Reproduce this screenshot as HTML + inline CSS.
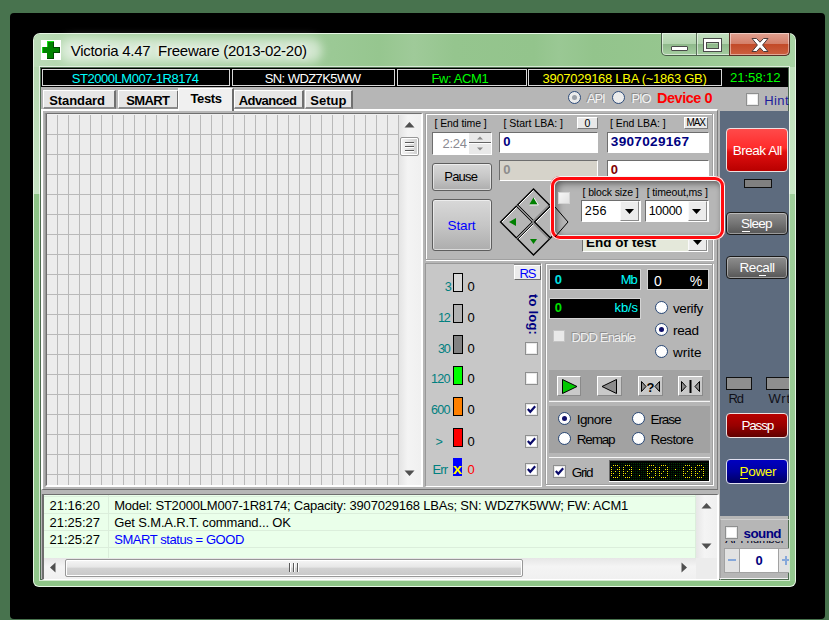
<!DOCTYPE html>
<html><head><meta charset="utf-8"><title>Victoria 4.47</title>
<style>
html,body{margin:0;padding:0}
body{width:829px;height:620px;overflow:hidden;position:relative;background:#48734e;font-family:"Liberation Sans",sans-serif;}
.a{position:absolute;box-sizing:border-box}
.t{position:absolute;white-space:pre;line-height:normal;font-family:"Liberation Sans",sans-serif;}

.btn{background:linear-gradient(#d8d8d8,#c6c6c6 50%,#adadad);border:1px solid #5e5e5e;border-radius:3px;box-shadow:inset 0 0 0 1px rgba(255,255,255,.55)}
.edit{background:#fff;border:1px solid;border-color:#6e6e6e #fff #fff #6e6e6e}
.chk{background:#fff;border:1px solid #8e8f8f;box-shadow:inset 0 0 0 1px #e9e9e9}
.rad{background:radial-gradient(circle at 50% 40%,#fff 55%,#e4e8ee 100%);border:1px solid #2c4a78;border-radius:50%}
.cb{background:#ececec;border:1px solid;border-color:#fafafa #8c8c8c #8c8c8c #fafafa}
.bb{background:#000;border:1px solid #d4d4d4}

</style></head><body>
<div class="a " style="left:10px;top:13px;width:815px;height:606px;background:#000;border-radius:4px"></div>
<div class="a " style="left:33px;top:33px;width:763px;height:554px;border-radius:7px 7px 6px 6px;background:#8ec487;border:1px solid rgba(238,248,236,.92)"></div>
<div class="a " style="left:34px;top:34px;width:761px;height:33px;background:linear-gradient(90deg,#bcdcb8 0px,#b2d7ad 30px,#a6d0a0 90px,#9fcc99 200px,#9bc995 300px,#96c68f 345px,#9fca99 380px,#95c58e 420px,#93c48c 500px,#9ac894 525px,#93c48c 560px,#96c68f 640px,#a8d3a3 761px);border-radius:6px 6px 0 0"></div>
<div class="a " style="left:60px;top:38px;width:262px;height:25px;background:rgba(255,255,255,.55);filter:blur(5px);border-radius:12px"></div>
<div class="a " style="left:34px;top:67px;width:6px;height:127px;background:linear-gradient(180deg,#b5d7b0,#c6e2c2)"></div>
<div class="a " style="left:34px;top:194px;width:6px;height:387px;background:linear-gradient(180deg,#8cc285,#90c68a)"></div>
<div class="a " style="left:789px;top:67px;width:6px;height:127px;background:linear-gradient(180deg,#bfe0bb,#c8e6c4)"></div>
<div class="a " style="left:789px;top:194px;width:6px;height:387px;background:linear-gradient(180deg,#9fce9a,#93c78e)"></div>
<div class="a " style="left:39px;top:66px;width:751px;height:515px;border:1px solid rgba(255,255,255,.62)"></div>
<div class="a " style="left:41px;top:40px;width:20px;height:20px;background:#fff"></div>
<svg class="a" style="left:41px;top:40px" width="20" height="20" shape-rendering="crispEdges"><path d="M6 1h7v6h6v6h-6v6h-7v-6h-5v-6h5z" fill="#008200"/><path d="M6 1h7v1h-6v5h-5v6h-1v-6h5z" fill="#12e012"/><path d="M12 2h1v5h6v6h-6v6h-7v-1h6v-6h6v-4h-6z" fill="#004a00"/></svg>
<span class="t" style="left:70.70px;top:42.02px;font-size:15px;color:#000;letter-spacing:-0.268px;text-shadow:0 0 5px rgba(255,255,255,.9),0 0 8px rgba(255,255,255,.7)">Victoria 4.47  Freeware (2013-02-20)</span>
<div class="a " style="left:661px;top:33px;width:129px;height:23px;border:1px solid #4a5e4a;border-top:none;border-radius:0 0 5px 5px;background:linear-gradient(180deg,#c3dfc0 0,#b2d4ae 48%,#8fb98b 52%,#a5cea0 100%);box-shadow:inset 0 0 0 1px rgba(255,255,255,.55)"></div>
<div class="a " style="left:696px;top:33px;width:1px;height:22px;background:#5a6e5a"></div>
<div class="a " style="left:697px;top:34px;width:1px;height:21px;background:rgba(255,255,255,.5)"></div>
<div class="a " style="left:729px;top:33px;width:61px;height:23px;border:1px solid #5a3028;border-top:none;border-radius:0 0 5px 0;background:linear-gradient(180deg,#e0a090 0,#d4806a 48%,#c24a28 52%,#cc6040 100%);box-shadow:inset 0 0 0 1px rgba(255,255,255,.45)"></div>
<div class="a " style="left:671px;top:46px;width:17px;height:5px;background:#fff;border:1px solid #4a4a4a;border-radius:1px"></div>
<div class="a " style="left:704px;top:39px;width:17px;height:12px;background:transparent;border:2px solid #fff;border-top-width:3px;outline:1px solid #4a4a4a;box-shadow:inset 0 0 0 1px #4a4a4a"></div>
<svg class="a" style="left:749px;top:37px" width="22" height="16" viewBox="0 0 22 16"><path d="M3 1.5 L7.5 1.5 L11 5.2 L14.5 1.5 L19 1.5 L13.6 8 L19 14.5 L14.5 14.5 L11 10.8 L7.5 14.5 L3 14.5 L8.4 8 Z" fill="#fff" stroke="#4a3a3a" stroke-width="1"/></svg>
<div class="a" style="left:40px;top:67px;width:749px;height:513px;background:#4e6c50;overflow:hidden"><div class="a" style="left:-40px;top:-67px;width:829px;height:620px">
<div class="a " style="left:41px;top:68px;width:747px;height:511px;background:#b6b6b6"></div>
<div class="a " style="left:41px;top:68px;width:747px;height:19px;background:#000"></div>
<div class="a " style="left:42px;top:69px;width:188px;height:17px;border:1px solid #d8d8d8"></div>
<div class="a " style="left:232px;top:69px;width:163px;height:17px;border:1px solid #d8d8d8"></div>
<div class="a " style="left:397px;top:69px;width:130px;height:17px;border:1px solid #d8d8d8"></div>
<div class="a " style="left:528px;top:69px;width:194px;height:17px;border:1px solid #d8d8d8"></div>
<span class="t" style="left:71.80px;top:70.83px;font-size:13px;color:#00ffff;letter-spacing:-0.468px;">ST2000LM007-1R8174</span>
<span class="t" style="left:264.70px;top:70.83px;font-size:13px;color:#ffffff;letter-spacing:-0.569px;">SN: WDZ7K5WW</span>
<span class="t" style="left:431.40px;top:70.83px;font-size:13px;color:#00ff00;letter-spacing:-0.367px;">Fw: ACM1</span>
<span class="t" style="left:542.50px;top:70.83px;font-size:13px;color:#ffff00;letter-spacing:-0.277px;">3907029168 LBA (~1863 GB)</span>
<span class="t" style="left:730.00px;top:70.45px;font-size:13.2px;color:#00ff00;letter-spacing:-0.106px;">21:58:12</span>
<div class="a " style="left:41px;top:109px;width:677px;height:381px;border-left:2px solid #fff;border-top:2px solid #fff;border-right:1px solid #7c7c7c;border-bottom:1px solid #707070"></div>
<div class="a " style="left:43px;top:90px;width:73px;height:19px;background:#e6e6e6;border-left:1px solid #fff;border-top:1px solid #fff;border-right:2px solid #707070;border-bottom:2px solid #8c8c8c"></div>
<span class="t" style="left:49.20px;top:93.23px;font-size:13px;color:#000;font-weight:bold;letter-spacing:-0.078px;">Standard</span>
<div class="a " style="left:118px;top:90px;width:61px;height:19px;background:#e6e6e6;border-left:1px solid #fff;border-top:1px solid #fff;border-right:2px solid #707070;border-bottom:2px solid #8c8c8c"></div>
<span class="t" style="left:126.20px;top:93.23px;font-size:13px;color:#000;font-weight:bold;letter-spacing:-0.605px;">SMART</span>
<div class="a " style="left:234px;top:90px;width:70px;height:19px;background:#e6e6e6;border-left:1px solid #fff;border-top:1px solid #fff;border-right:2px solid #707070;border-bottom:2px solid #8c8c8c"></div>
<span class="t" style="left:238.70px;top:93.23px;font-size:13px;color:#000;font-weight:bold;letter-spacing:-0.549px;">Advanced</span>
<div class="a " style="left:305px;top:90px;width:48px;height:19px;background:#e6e6e6;border-left:1px solid #fff;border-top:1px solid #fff;border-right:2px solid #707070;border-bottom:2px solid #8c8c8c"></div>
<span class="t" style="left:310.30px;top:93.23px;font-size:13px;color:#000;font-weight:bold;letter-spacing:0.019px;">Setup</span>
<div class="a " style="left:178px;top:88px;width:56px;height:23px;background:#f0f0f0;border-left:1px solid #fff;border-top:1px solid #fff;border-right:2px solid #6c6c6c;"></div>
<span class="t" style="left:190.50px;top:90.73px;font-size:13px;color:#000;font-weight:bold;letter-spacing:-0.375px;">Tests</span>
<div class="a " style="left:44px;top:113px;width:1px;height:374px;background:#aeaeae"></div>
<div class="a " style="left:44px;top:113px;width:379px;height:1px;background:#a8a8a8"></div>
<div class="a " style="left:45px;top:113px;width:378px;height:374px;border:solid;border-width:1px 2px 2px 2px;border-color:#707070 #fff #fff #989898;background:#f0f0f0"></div>
<div class="a " style="left:46px;top:114px;width:1px;height:371px;background:#6e6e6e"></div>
<div class="a " style="left:47px;top:115px;width:352px;height:370px;background:repeating-linear-gradient(90deg,transparent 0,transparent 10px,#b9b9b9 10px,#b9b9b9 11px),repeating-linear-gradient(180deg,transparent 0,transparent 19px,#b9b9b9 19px,#b9b9b9 20px),#ececec"></div>
<div class="a " style="left:399px;top:115px;width:22px;height:370px;background:linear-gradient(90deg,#e4e4e4,#f4f4f4 40%,#f0f0f0)"></div>
<svg class="a" style="left:404px;top:121px" width="11" height="7"><path d="M0.5 6.5 L5.5 1 L10.5 6.5 Z" fill="#505050"/></svg>
<svg class="a" style="left:404px;top:470px" width="11" height="7"><path d="M0.5 0.5 L5.5 6 L10.5 0.5 Z" fill="#505050"/></svg>
<div class="a " style="left:400px;top:137px;width:19px;height:19px;background:linear-gradient(90deg,#f6f6f6,#e2e2e2 50%,#cfcfcf);border:1px solid #979797;border-radius:2px;box-shadow:inset 0 0 0 1px #fff"></div>
<div class="a " style="left:405px;top:142px;width:9px;height:1px;background:#5a5a5a"></div>
<div class="a " style="left:405px;top:143px;width:9px;height:1px;background:#fff"></div>
<div class="a " style="left:405px;top:146px;width:9px;height:1px;background:#5a5a5a"></div>
<div class="a " style="left:405px;top:147px;width:9px;height:1px;background:#fff"></div>
<div class="a " style="left:405px;top:150px;width:9px;height:1px;background:#5a5a5a"></div>
<div class="a " style="left:405px;top:151px;width:9px;height:1px;background:#fff"></div>
<div class="a rad" style="left:567.5px;top:90.5px;width:13px;height:13px;background:#ececec"></div>
<div class="a " style="left:571.5px;top:94.5px;width:5px;height:5px;background:#9aa0a8;border-radius:50%"></div>
<span class="t" style="left:587.00px;top:90.94px;font-size:13px;color:#f4f4f4;letter-spacing:-1.200px;text-shadow:-1px -1px 0 #8a8a8a">API</span>
<div class="a rad" style="left:611.5px;top:90.5px;width:13px;height:13px;background:#ececec"></div>
<span class="t" style="left:631.60px;top:90.94px;font-size:13px;color:#f4f4f4;letter-spacing:-1.200px;text-shadow:-1px -1px 0 #8a8a8a">PIO</span>
<span class="t" style="left:657.00px;top:89.68px;font-size:14.5px;color:#ff0000;font-weight:bold;letter-spacing:-0.480px;">Device 0</span>
<div class="a chk" style="left:746px;top:93px;width:13px;height:13px;"></div>
<span class="t" style="left:764.30px;top:93.03px;font-size:13px;color:#1c1c9c;letter-spacing:0.394px;">Hints</span>
<div class="a " style="left:426px;top:114px;width:288px;height:147px;border:1px solid #fff"></div>
<div class="a " style="left:425px;top:113px;width:288px;height:147px;border:1px solid #a0a0a0;border-right-color:transparent;border-bottom-color:transparent"></div>
<div class="a " style="left:426px;top:259px;width:286px;height:1px;background:#a0a0a0"></div>
<div class="a " style="left:712px;top:114px;width:1px;height:146px;background:#a0a0a0"></div>
<span class="t" style="left:434.50px;top:116.90px;font-size:10.5px;color:#000;letter-spacing:-0.083px;">[ End time ]</span>
<div class="a edit" style="left:432px;top:132px;width:60px;height:23px;"></div>
<span class="t" style="left:442.50px;top:135.83px;font-size:13px;color:#8a8a92;letter-spacing:-0.271px;">2:24</span>
<div class="a " style="left:469px;top:133px;width:22px;height:21px;background:#e9e9e9"></div>
<div class="a " style="left:469px;top:142px;width:22px;height:2px;background:#646464;border-bottom:1px solid #fff"></div>
<svg class="a" style="left:477px;top:136px" width="6" height="4"><path d="M0 3.5 L3 0.5 L6 3.5 Z" fill="#8a8a8a"/></svg>
<svg class="a" style="left:477px;top:147px" width="6" height="4"><path d="M0 0.5 L3 3.5 L6 0.5 Z" fill="#8a8a8a"/></svg>
<span class="t" style="left:503.50px;top:116.90px;font-size:10.5px;color:#000;letter-spacing:-0.002px;">[ Start LBA: ]</span>
<div class="a " style="left:577px;top:117px;width:21px;height:12px;background:#e8e8e8;border:1px solid;border-color:#fff #7a7a7a #7a7a7a #fff"></div>
<span class="t" style="left:584.60px;top:116.90px;font-size:10.5px;color:#000;">0</span>
<div class="a edit" style="left:499px;top:132px;width:99px;height:21px;"></div>
<span class="t" style="left:503.20px;top:134.44px;font-size:13px;color:#000080;font-weight:bold;">0</span>
<span class="t" style="left:610.00px;top:116.90px;font-size:10.5px;color:#000;letter-spacing:-0.022px;">[ End LBA: ]</span>
<div class="a " style="left:684px;top:117px;width:24px;height:12px;background:#e8e8e8;border:1px solid;border-color:#fff #7a7a7a #7a7a7a #fff"></div>
<span class="t" style="left:686.60px;top:117.35px;font-size:10px;color:#000;letter-spacing:-1.136px;">MAX</span>
<div class="a edit" style="left:607px;top:132px;width:102px;height:21px;"></div>
<span class="t" style="left:610.80px;top:133.89px;font-size:13.6px;color:#000080;font-weight:bold;letter-spacing:0.288px;">3907029167</span>
<div class="a btn" style="left:432px;top:163px;width:60px;height:28px;"></div>
<span class="t" style="left:444.30px;top:169.04px;font-size:13px;color:#000;letter-spacing:-0.819px;">Pause</span>
<div class="a edit" style="left:499px;top:160px;width:99px;height:21px;background:#d6d3ca"></div>
<span class="t" style="left:503.20px;top:162.44px;font-size:13px;color:#8c8c8c;font-weight:bold;">0</span>
<div class="a edit" style="left:607px;top:160px;width:102px;height:21px;"></div>
<span class="t" style="left:610.80px;top:162.44px;font-size:13px;color:#800000;font-weight:bold;">0</span>
<div class="a btn" style="left:432px;top:199px;width:60px;height:52px;"></div>
<span class="t" style="left:447.50px;top:217.98px;font-size:13.5px;color:#0000ff;letter-spacing:-0.129px;">Start</span>
<svg class="a" style="left:497.2px;top:186px" width="72" height="72" viewBox="498 186 72 72">
<g fill="none" stroke="#000" stroke-width="1.35">
<path d="M534.5 189 L550.5 205 L534.5 221 L518.5 205 Z"/>
<path d="M517.5 206 L533.5 222 L517.5 238 L501.5 222 Z"/>
<path d="M551.5 206 L567.5 222 L551.5 238 L535.5 222 Z"/>
<path d="M534.5 223 L550.5 239 L534.5 255 L518.5 239 Z"/>
</g>
<g fill="none" stroke="#fff" stroke-width="1">
<path d="M534.5 190.5 L520 205"/><path d="M517.5 207.5 L503 222"/><path d="M551.5 207.5 L537 222"/><path d="M534.5 224.5 L520 239"/>
<path d="M518 205.5 L534 221.5 L550 205.5"/><path d="M518 238.5 L534 222.5 L550 238.5"/>
</g>
<path d="M534.5 197.5 L538.7 204.5 L530.3 204.5 Z" fill="#008000"/><path d="M535.2 198 L539.4 205 L530.5 205" fill="none" stroke="#fff" stroke-width="0.8"/>
<path d="M510 222 L517 218 L517 226 Z" fill="#008000"/>
<path d="M534.5 244 L531 239 L538 239 Z" fill="#008000"/>
<path d="M560 222 L553 218 L553 226 Z" fill="#008000"/>
</svg>
<div class="a edit" style="left:582px;top:231px;width:126px;height:21px;background:#e4e8da"></div>
<span class="t" style="left:586.00px;top:234.98px;font-size:13.5px;color:#000;font-weight:bold;letter-spacing:0.025px;">End of test</span>
<div class="a cb" style="left:688px;top:232px;width:19px;height:19px;"></div>
<svg class="a" style="left:693px;top:240px" width="9" height="5"><path d="M0 0 L9 0 L4.5 5 Z" fill="#000"/></svg>
<div class="a " style="left:425px;top:263px;width:117px;height:224px;background:#c7c7c7;border:1px solid;border-color:#989898 #fff #fff #989898"></div>
<div class="a " style="left:514px;top:265px;width:27px;height:15px;background:#ececec;border:1px solid;border-color:#fff #6a6a6a #6a6a6a #fff;box-shadow:0 -1px 0 0 #8a8a8a"></div>
<span class="t" style="left:519.50px;top:265.94px;font-size:13px;color:#0000ff;letter-spacing:-1.200px;">RS</span>
<div class="a " style="left:453px;top:273px;width:10px;height:19px;background:#d8d8d8;border:1px solid #000"></div>
<span class="t" style="left:444.70px;top:279.80px;font-size:12.6px;color:#008080;">3</span>
<span class="t" style="left:467.50px;top:279.44px;font-size:13px;color:#000;">0</span>
<div class="a " style="left:453px;top:304px;width:10px;height:19px;background:#b2b2b2;border:1px solid #000"></div>
<span class="t" style="left:438.00px;top:310.80px;font-size:12.6px;color:#008080;letter-spacing:-1.200px;">12</span>
<span class="t" style="left:467.50px;top:310.44px;font-size:13px;color:#000;">0</span>
<div class="a " style="left:453px;top:335px;width:10px;height:19px;background:#828282;border:1px solid #000"></div>
<span class="t" style="left:438.00px;top:341.80px;font-size:12.6px;color:#008080;letter-spacing:-1.200px;">30</span>
<span class="t" style="left:467.50px;top:341.44px;font-size:13px;color:#000;">0</span>
<div class="a " style="left:453px;top:366px;width:10px;height:19px;background:#00ff00;border:1px solid #000"></div>
<span class="t" style="left:431.00px;top:371.80px;font-size:12.6px;color:#008080;letter-spacing:-0.708px;">120</span>
<span class="t" style="left:467.50px;top:371.44px;font-size:13px;color:#000;">0</span>
<div class="a " style="left:453px;top:397px;width:10px;height:19px;background:#ff8000;border:1px solid #000"></div>
<span class="t" style="left:431.00px;top:402.80px;font-size:12.6px;color:#008080;letter-spacing:-0.708px;">600</span>
<span class="t" style="left:467.50px;top:402.44px;font-size:13px;color:#000;">0</span>
<div class="a " style="left:453px;top:428px;width:10px;height:19px;background:#ff0000;border:1px solid #000"></div>
<span class="t" style="left:435.50px;top:434.80px;font-size:12.6px;color:#008080;">&gt;</span>
<span class="t" style="left:467.50px;top:434.44px;font-size:13px;color:#000;">0</span>
<div class="a " style="left:453px;top:458px;width:9px;height:18px;background:#0000ff"></div>
<span class="t" style="left:453.10px;top:459.57px;font-size:15.5px;color:#ffff00;font-weight:bold;transform:scaleX(1.08);transform-origin:0 0;">x</span>
<span class="t" style="left:432.60px;top:461.94px;font-size:13px;color:#008080;letter-spacing:-0.972px;">Err</span>
<span class="t" style="left:467.50px;top:461.94px;font-size:13px;color:#ff0000;">0</span>
<span class="t" style="left:528.5px;top:294px;font-size:13px;font-weight:bold;color:#000080;transform-origin:0 0;transform:rotate(90deg) translate(0,-11.5px);letter-spacing:0.2px">to log:</span>
<div class="a chk" style="left:525px;top:342px;width:13px;height:13px;"></div>
<div class="a chk" style="left:525px;top:372px;width:13px;height:13px;"></div>
<div class="a chk" style="left:525px;top:403px;width:13px;height:13px;"></div>
<svg class="a" style="left:527px;top:405px" width="9" height="9"><path d="M0.8 4 L3.3 6.8 L8.2 1.2" fill="none" stroke="#0a0a6a" stroke-width="2.2"/></svg>
<div class="a chk" style="left:525px;top:435px;width:13px;height:13px;"></div>
<svg class="a" style="left:527px;top:437px" width="9" height="9"><path d="M0.8 4 L3.3 6.8 L8.2 1.2" fill="none" stroke="#0a0a6a" stroke-width="2.2"/></svg>
<div class="a chk" style="left:525px;top:463px;width:13px;height:13px;"></div>
<svg class="a" style="left:527px;top:465px" width="9" height="9"><path d="M0.8 4 L3.3 6.8 L8.2 1.2" fill="none" stroke="#0a0a6a" stroke-width="2.2"/></svg>
<div class="a " style="left:546px;top:264px;width:168px;height:222px;border:1px solid #fff"></div>
<div class="a " style="left:545px;top:263px;width:168px;height:222px;border:1px solid #a0a0a0;border-right-color:transparent;border-bottom-color:transparent"></div>
<div class="a " style="left:546px;top:484px;width:166px;height:1px;background:#a0a0a0"></div>
<div class="a " style="left:712px;top:264px;width:1px;height:221px;background:#a0a0a0"></div>
<div class="a bb" style="left:549px;top:269px;width:92px;height:21px;"></div>
<span class="t" style="left:554.80px;top:272.24px;font-size:13px;color:#00e0e0;font-weight:bold;">0</span>
<span class="t" style="left:620.80px;top:272.24px;font-size:13px;color:#00ffff;letter-spacing:-1.200px;">Mb</span>
<div class="a bb" style="left:647px;top:269px;width:62px;height:21px;"></div>
<span class="t" style="left:654.00px;top:272.93px;font-size:14px;color:#fff;">0</span>
<span class="t" style="left:689.80px;top:272.93px;font-size:14px;color:#fff;">%</span>
<div class="a bb" style="left:549px;top:298px;width:92px;height:21px;"></div>
<span class="t" style="left:554.80px;top:300.44px;font-size:13px;color:#00e000;font-weight:bold;">0</span>
<span class="t" style="left:614.60px;top:300.44px;font-size:13px;color:#00ffff;letter-spacing:-0.148px;">kb/s</span>
<div class="a rad" style="left:654.5px;top:301.0px;width:13px;height:13px;"></div>
<span class="t" style="left:673.00px;top:300.98px;font-size:13.5px;color:#000;letter-spacing:-0.393px;">verify</span>
<div class="a rad" style="left:654.5px;top:323.0px;width:13px;height:13px;"></div>
<div class="a " style="left:658.5px;top:327.0px;width:5px;height:5px;background:#10106a;border-radius:50%"></div>
<span class="t" style="left:673.00px;top:322.98px;font-size:13.5px;color:#000;letter-spacing:-0.344px;">read</span>
<div class="a rad" style="left:654.5px;top:345.1px;width:13px;height:13px;"></div>
<span class="t" style="left:673.00px;top:345.08px;font-size:13.5px;color:#000;letter-spacing:-0.004px;">write</span>
<div class="a " style="left:553px;top:330px;width:12px;height:12px;background:#e9e9e9;border:1px solid #c4c4c4"></div>
<span class="t" style="left:571.60px;top:329.94px;font-size:13px;color:#f0f0f0;letter-spacing:-0.874px;text-shadow:-1px -1px 0 #8e8e8e">DDD Enable</span>
<div class="a " style="left:549px;top:370px;width:161px;height:30px;background:#a2a2a2"></div>
<div class="a " style="left:549px;top:401px;width:161px;height:1px;background:#f6f6f6"></div>
<div class="a " style="left:557px;top:376px;width:24px;height:20px;background:#c9c9c9;border:1px solid;border-color:#fff #8a8a8a #8a8a8a #fff"></div>
<div class="a " style="left:597px;top:376px;width:25px;height:20px;background:#c9c9c9;border:1px solid;border-color:#fff #8a8a8a #8a8a8a #fff"></div>
<div class="a " style="left:638px;top:376px;width:25px;height:20px;background:#c9c9c9;border:1px solid;border-color:#fff #8a8a8a #8a8a8a #fff"></div>
<div class="a " style="left:678px;top:376px;width:25px;height:20px;background:#c9c9c9;border:1px solid;border-color:#fff #8a8a8a #8a8a8a #fff"></div>
<svg class="a" style="left:557px;top:375.5px" width="24" height="21"><path d="M5.5 3.5 L5.5 17.5 L20 10.5 Z" fill="#00c800" stroke="#000" stroke-width="1"/></svg>
<svg class="a" style="left:597px;top:375.5px" width="25" height="21"><path d="M19.5 3.5 L19.5 17.5 L5 10.5 Z" fill="#8c8c8c" stroke="#000" stroke-width="1"/></svg>
<svg class="a" style="left:638px;top:375.5px" width="25" height="21"><path d="M3.5 5.5 L3.5 15.5 L8 10.5 Z" fill="#8c8c8c" stroke="#000" stroke-width="1"/><path d="M21.5 5.5 L21.5 15.5 L17 10.5 Z" fill="#8c8c8c" stroke="#000" stroke-width="1"/><text x="12.5" y="15.5" text-anchor="middle" font-family="Liberation Sans" font-weight="bold" font-size="13" fill="#000">?</text></svg>
<svg class="a" style="left:678px;top:375.5px" width="25" height="21"><path d="M3.5 5.5 L3.5 15.5 L8 10.5 Z" fill="#8c8c8c" stroke="#000" stroke-width="1"/><path d="M21.5 5.5 L21.5 15.5 L17 10.5 Z" fill="#8c8c8c" stroke="#000" stroke-width="1"/><rect x="11.5" y="4" width="2" height="13" fill="#000"/></svg>
<div class="a " style="left:549px;top:406px;width:161px;height:47px;background:#a2a2a2"></div>
<div class="a " style="left:549px;top:457px;width:161px;height:1px;background:#f6f6f6"></div>
<div class="a rad" style="left:557.8px;top:412.1px;width:13px;height:13px;"></div>
<div class="a " style="left:561.8px;top:416.1px;width:5px;height:5px;background:#10106a;border-radius:50%"></div>
<span class="t" style="left:576.70px;top:412.08px;font-size:13.5px;color:#000;letter-spacing:-0.536px;">Ignore</span>
<div class="a rad" style="left:631.9px;top:412.1px;width:13px;height:13px;"></div>
<span class="t" style="left:650.40px;top:412.08px;font-size:13.5px;color:#000;letter-spacing:-1.020px;">Erase</span>
<div class="a rad" style="left:557.8px;top:432.1px;width:13px;height:13px;"></div>
<span class="t" style="left:576.70px;top:432.08px;font-size:13.5px;color:#000;letter-spacing:-1.158px;">Remap</span>
<div class="a rad" style="left:631.9px;top:432.1px;width:13px;height:13px;"></div>
<span class="t" style="left:650.40px;top:432.08px;font-size:13.5px;color:#000;letter-spacing:-0.664px;">Restore</span>
<div class="a chk" style="left:553px;top:465px;width:13px;height:13px;"></div>
<svg class="a" style="left:555px;top:467px" width="9" height="9"><path d="M0.8 4 L3.3 6.8 L8.2 1.2" fill="none" stroke="#0a0a6a" stroke-width="2.2"/></svg>
<span class="t" style="left:571.70px;top:465.38px;font-size:13.5px;color:#000;letter-spacing:-1.200px;">Grid</span>
<svg class="a" style="left:609px;top:460px" width="101" height="22" viewBox="609 460 101 22" shape-rendering="crispEdges"><rect x="609" y="460" width="101" height="22" fill="#fff"/><rect x="609" y="460" width="100" height="21" fill="#6a6a6a"/><rect x="610" y="461" width="99" height="20" fill="#000"/><defs><pattern id="dd" x="611" y="463" width="2" height="2" patternUnits="userSpaceOnUse"><rect width="1" height="1" fill="#003400"/></pattern></defs><rect x="611" y="463" width="97" height="17" fill="url(#dd)"/><rect x="613" y="465" width="1" height="1" fill="#f4f400"/><rect x="615" y="465" width="1" height="1" fill="#f4f400"/><rect x="617" y="465" width="1" height="1" fill="#f4f400"/><rect x="611" y="467" width="1" height="1" fill="#f4f400"/><rect x="619" y="467" width="1" height="1" fill="#f4f400"/><rect x="611" y="469" width="1" height="1" fill="#f4f400"/><rect x="617" y="469" width="1" height="1" fill="#f4f400"/><rect x="619" y="469" width="1" height="1" fill="#f4f400"/><rect x="611" y="471" width="1" height="1" fill="#f4f400"/><rect x="615" y="471" width="1" height="1" fill="#f4f400"/><rect x="619" y="471" width="1" height="1" fill="#f4f400"/><rect x="611" y="473" width="1" height="1" fill="#f4f400"/><rect x="613" y="473" width="1" height="1" fill="#f4f400"/><rect x="619" y="473" width="1" height="1" fill="#f4f400"/><rect x="611" y="475" width="1" height="1" fill="#f4f400"/><rect x="619" y="475" width="1" height="1" fill="#f4f400"/><rect x="613" y="477" width="1" height="1" fill="#f4f400"/><rect x="615" y="477" width="1" height="1" fill="#f4f400"/><rect x="617" y="477" width="1" height="1" fill="#f4f400"/><rect x="625" y="465" width="1" height="1" fill="#f4f400"/><rect x="627" y="465" width="1" height="1" fill="#f4f400"/><rect x="629" y="465" width="1" height="1" fill="#f4f400"/><rect x="623" y="467" width="1" height="1" fill="#f4f400"/><rect x="631" y="467" width="1" height="1" fill="#f4f400"/><rect x="623" y="469" width="1" height="1" fill="#f4f400"/><rect x="629" y="469" width="1" height="1" fill="#f4f400"/><rect x="631" y="469" width="1" height="1" fill="#f4f400"/><rect x="623" y="471" width="1" height="1" fill="#f4f400"/><rect x="627" y="471" width="1" height="1" fill="#f4f400"/><rect x="631" y="471" width="1" height="1" fill="#f4f400"/><rect x="623" y="473" width="1" height="1" fill="#f4f400"/><rect x="625" y="473" width="1" height="1" fill="#f4f400"/><rect x="631" y="473" width="1" height="1" fill="#f4f400"/><rect x="623" y="475" width="1" height="1" fill="#f4f400"/><rect x="631" y="475" width="1" height="1" fill="#f4f400"/><rect x="625" y="477" width="1" height="1" fill="#f4f400"/><rect x="627" y="477" width="1" height="1" fill="#f4f400"/><rect x="629" y="477" width="1" height="1" fill="#f4f400"/><rect x="649" y="465" width="1" height="1" fill="#f4f400"/><rect x="651" y="465" width="1" height="1" fill="#f4f400"/><rect x="653" y="465" width="1" height="1" fill="#f4f400"/><rect x="647" y="467" width="1" height="1" fill="#f4f400"/><rect x="655" y="467" width="1" height="1" fill="#f4f400"/><rect x="647" y="469" width="1" height="1" fill="#f4f400"/><rect x="653" y="469" width="1" height="1" fill="#f4f400"/><rect x="655" y="469" width="1" height="1" fill="#f4f400"/><rect x="647" y="471" width="1" height="1" fill="#f4f400"/><rect x="651" y="471" width="1" height="1" fill="#f4f400"/><rect x="655" y="471" width="1" height="1" fill="#f4f400"/><rect x="647" y="473" width="1" height="1" fill="#f4f400"/><rect x="649" y="473" width="1" height="1" fill="#f4f400"/><rect x="655" y="473" width="1" height="1" fill="#f4f400"/><rect x="647" y="475" width="1" height="1" fill="#f4f400"/><rect x="655" y="475" width="1" height="1" fill="#f4f400"/><rect x="649" y="477" width="1" height="1" fill="#f4f400"/><rect x="651" y="477" width="1" height="1" fill="#f4f400"/><rect x="653" y="477" width="1" height="1" fill="#f4f400"/><rect x="661" y="465" width="1" height="1" fill="#f4f400"/><rect x="663" y="465" width="1" height="1" fill="#f4f400"/><rect x="665" y="465" width="1" height="1" fill="#f4f400"/><rect x="659" y="467" width="1" height="1" fill="#f4f400"/><rect x="667" y="467" width="1" height="1" fill="#f4f400"/><rect x="659" y="469" width="1" height="1" fill="#f4f400"/><rect x="665" y="469" width="1" height="1" fill="#f4f400"/><rect x="667" y="469" width="1" height="1" fill="#f4f400"/><rect x="659" y="471" width="1" height="1" fill="#f4f400"/><rect x="663" y="471" width="1" height="1" fill="#f4f400"/><rect x="667" y="471" width="1" height="1" fill="#f4f400"/><rect x="659" y="473" width="1" height="1" fill="#f4f400"/><rect x="661" y="473" width="1" height="1" fill="#f4f400"/><rect x="667" y="473" width="1" height="1" fill="#f4f400"/><rect x="659" y="475" width="1" height="1" fill="#f4f400"/><rect x="667" y="475" width="1" height="1" fill="#f4f400"/><rect x="661" y="477" width="1" height="1" fill="#f4f400"/><rect x="663" y="477" width="1" height="1" fill="#f4f400"/><rect x="665" y="477" width="1" height="1" fill="#f4f400"/><rect x="685" y="465" width="1" height="1" fill="#f4f400"/><rect x="687" y="465" width="1" height="1" fill="#f4f400"/><rect x="689" y="465" width="1" height="1" fill="#f4f400"/><rect x="683" y="467" width="1" height="1" fill="#f4f400"/><rect x="691" y="467" width="1" height="1" fill="#f4f400"/><rect x="683" y="469" width="1" height="1" fill="#f4f400"/><rect x="689" y="469" width="1" height="1" fill="#f4f400"/><rect x="691" y="469" width="1" height="1" fill="#f4f400"/><rect x="683" y="471" width="1" height="1" fill="#f4f400"/><rect x="687" y="471" width="1" height="1" fill="#f4f400"/><rect x="691" y="471" width="1" height="1" fill="#f4f400"/><rect x="683" y="473" width="1" height="1" fill="#f4f400"/><rect x="685" y="473" width="1" height="1" fill="#f4f400"/><rect x="691" y="473" width="1" height="1" fill="#f4f400"/><rect x="683" y="475" width="1" height="1" fill="#f4f400"/><rect x="691" y="475" width="1" height="1" fill="#f4f400"/><rect x="685" y="477" width="1" height="1" fill="#f4f400"/><rect x="687" y="477" width="1" height="1" fill="#f4f400"/><rect x="689" y="477" width="1" height="1" fill="#f4f400"/><rect x="697" y="465" width="1" height="1" fill="#f4f400"/><rect x="699" y="465" width="1" height="1" fill="#f4f400"/><rect x="701" y="465" width="1" height="1" fill="#f4f400"/><rect x="695" y="467" width="1" height="1" fill="#f4f400"/><rect x="703" y="467" width="1" height="1" fill="#f4f400"/><rect x="695" y="469" width="1" height="1" fill="#f4f400"/><rect x="701" y="469" width="1" height="1" fill="#f4f400"/><rect x="703" y="469" width="1" height="1" fill="#f4f400"/><rect x="695" y="471" width="1" height="1" fill="#f4f400"/><rect x="699" y="471" width="1" height="1" fill="#f4f400"/><rect x="703" y="471" width="1" height="1" fill="#f4f400"/><rect x="695" y="473" width="1" height="1" fill="#f4f400"/><rect x="697" y="473" width="1" height="1" fill="#f4f400"/><rect x="703" y="473" width="1" height="1" fill="#f4f400"/><rect x="695" y="475" width="1" height="1" fill="#f4f400"/><rect x="703" y="475" width="1" height="1" fill="#f4f400"/><rect x="697" y="477" width="1" height="1" fill="#f4f400"/><rect x="699" y="477" width="1" height="1" fill="#f4f400"/><rect x="701" y="477" width="1" height="1" fill="#f4f400"/><rect x="639" y="469" width="1" height="1" fill="#f4f400"/><rect x="639" y="475" width="1" height="1" fill="#f4f400"/><rect x="675" y="469" width="1" height="1" fill="#f4f400"/><rect x="675" y="475" width="1" height="1" fill="#f4f400"/></svg>
<div class="a " style="left:42px;top:494px;width:677px;height:86px;background:#eaffea;border:solid;border-width:1px 2px 1px 2px;border-color:#6e6e6e #fff #fff #6e6e6e"></div>
<div class="a " style="left:44px;top:496px;width:652px;height:1px;background:#dbeedb"></div>
<div class="a " style="left:44px;top:513px;width:652px;height:1px;background:#dbeedb"></div>
<div class="a " style="left:44px;top:530px;width:652px;height:1px;background:#dbeedb"></div>
<div class="a " style="left:44px;top:547px;width:652px;height:1px;background:#dbeedb"></div>
<div class="a " style="left:108px;top:495px;width:1px;height:63px;background:#dbeedb"></div>
<div class="a " style="left:695px;top:495px;width:1px;height:63px;background:#dbeedb"></div>
<span class="t" style="left:49.50px;top:498.04px;font-size:13px;color:#000;letter-spacing:-0.016px;">21:16:20</span>
<span class="t" style="left:49.50px;top:515.03px;font-size:13px;color:#000;letter-spacing:-0.016px;">21:25:27</span>
<span class="t" style="left:49.50px;top:532.03px;font-size:13px;color:#000;letter-spacing:-0.016px;">21:25:27</span>
<span class="t" style="left:114.20px;top:498.04px;font-size:13px;color:#000;letter-spacing:-0.201px;">Model: ST2000LM007-1R8174; Capacity: 3907029168 LBAs; SN: WDZ7K5WW; FW: ACM1</span>
<span class="t" style="left:114.20px;top:515.03px;font-size:13px;color:#000;letter-spacing:-0.141px;">Get S.M.A.R.T. command... OK</span>
<span class="t" style="left:114.20px;top:532.03px;font-size:13px;color:#0000ff;letter-spacing:-0.426px;">SMART status = GOOD</span>
<div class="a " style="left:696px;top:495px;width:21px;height:63px;background:linear-gradient(90deg,#e6e6e6,#f4f4f4 40%,#f0f0f0)"></div>
<svg class="a" style="left:701px;top:502px" width="11" height="7"><path d="M0.5 6.5 L5.5 1 L10.5 6.5 Z" fill="#505050"/></svg>
<svg class="a" style="left:701px;top:543px" width="11" height="7"><path d="M0.5 0.5 L5.5 6 L10.5 0.5 Z" fill="#505050"/></svg>
<div class="a " style="left:44px;top:558px;width:652px;height:21px;background:linear-gradient(180deg,#e6e6e6,#f4f4f4 40%,#f0f0f0)"></div>
<div class="a " style="left:696px;top:558px;width:21px;height:21px;background:#ececec"></div>
<svg class="a" style="left:49px;top:562px" width="7" height="11"><path d="M6.5 0.5 L1 5.5 L6.5 10.5 Z" fill="#505050"/></svg>
<svg class="a" style="left:681px;top:562px" width="7" height="11"><path d="M0.5 0.5 L6 5.5 L0.5 10.5 Z" fill="#505050"/></svg>
<div class="a " style="left:65px;top:559px;width:458px;height:18px;background:linear-gradient(180deg,#f6f6f6,#e6e6e6 45%,#d2d2d2 50%,#c8c8c8);border:1px solid #979797;border-radius:2px;box-shadow:inset 0 0 0 1px #fff"></div>
<div class="a " style="left:289px;top:563px;width:1px;height:9px;background:#5a5a5a"></div>
<div class="a " style="left:290px;top:563px;width:1px;height:9px;background:#fff"></div>
<div class="a " style="left:293px;top:563px;width:1px;height:9px;background:#5a5a5a"></div>
<div class="a " style="left:294px;top:563px;width:1px;height:9px;background:#fff"></div>
<div class="a " style="left:297px;top:563px;width:1px;height:9px;background:#5a5a5a"></div>
<div class="a " style="left:298px;top:563px;width:1px;height:9px;background:#fff"></div>
<div class="a " style="left:720px;top:111px;width:70px;height:405px;background:#5d6b7e"></div>
<div class="a " style="left:726px;top:128px;width:62px;height:44px;border:1px solid #f0e0e0;border-radius:4px;background:linear-gradient(180deg,#ff4a4a 0,#ff2c2c 45%,#e01010 55%,#b80000 100%)"></div>
<span class="t" style="left:732.80px;top:142.58px;font-size:13.5px;color:#fff;letter-spacing:-0.485px;">Break All</span>
<div class="a " style="left:744px;top:179px;width:28px;height:9px;background:#808080;border:1px solid #101010"></div>
<div class="a " style="left:726px;top:212px;width:62px;height:23px;border:1px solid #1a1a1a;border-radius:4px;background:linear-gradient(180deg,#8e8e8e 0,#747474 50%,#565656 100%);box-shadow:inset 0 0 0 1px rgba(255,255,255,.4)"></div>
<span class="t" style="left:741.00px;top:216.38px;font-size:13.5px;color:#fff;letter-spacing:-0.758px;">Sleep</span>
<div class="a " style="left:726px;top:256px;width:62px;height:23px;border:1px solid #1a1a1a;border-radius:4px;background:linear-gradient(180deg,#8e8e8e 0,#747474 50%,#565656 100%);box-shadow:inset 0 0 0 1px rgba(255,255,255,.4)"></div>
<span class="t" style="left:739.50px;top:260.38px;font-size:13.5px;color:#fff;letter-spacing:-0.403px;">Recall</span>
<div class="a " style="left:741.5px;top:230.5px;width:8px;height:1px;background:#fff"></div>
<div class="a " style="left:758.5px;top:274.5px;width:7px;height:1px;background:#fff"></div>
<div class="a " style="left:726px;top:377px;width:26px;height:13px;background:#8e8e8e;border:1px solid #101010"></div>
<div class="a " style="left:766px;top:377px;width:30px;height:13px;background:#8e8e8e;border:1px solid #101010"></div>
<span class="t" style="left:728.60px;top:390.84px;font-size:13px;color:#101018;letter-spacing:-1.200px;">Rd</span>
<span class="t" style="left:768.50px;top:390.84px;font-size:13px;color:#101018;letter-spacing:0.758px;">Wrt</span>
<div class="a " style="left:726px;top:413px;width:62px;height:25px;border:1px solid #f0e0e0;border-radius:4px;background:linear-gradient(180deg,#b80000 0,#980000 50%,#600000 100%)"></div>
<span class="t" style="left:741.50px;top:418.48px;font-size:13.5px;color:#fff;letter-spacing:-1.200px;">Passp</span>
<div class="a " style="left:726px;top:459px;width:62px;height:25px;border:1px solid #e0e0f0;border-radius:4px;background:linear-gradient(180deg,#0000c0 0,#0000a0 50%,#000060 100%)"></div>
<span class="t" style="left:739.50px;top:464.48px;font-size:13.5px;color:#ffff00;letter-spacing:-0.316px;">Power</span>
<div class="a " style="left:739.8px;top:478px;width:8px;height:1px;background:#ffff00"></div>
<div class="a " style="left:720px;top:519px;width:70px;height:62px;border-top:1px solid #cfcfcf;border-left:1px solid #a4a4a4"></div>
<div class="a " style="left:720px;top:578px;width:68px;height:1px;background:#f4f4f4"></div>
<div class="a chk" style="left:725px;top:526px;width:13px;height:13px;"></div>
<span class="t" style="left:743.50px;top:526.17px;font-size:13.4px;color:#000080;font-weight:bold;letter-spacing:-0.543px;">sound</span>
<div class="a" style="left:724px;top:541px;width:64px;height:3px;overflow:hidden"><span class="t" style="left:1.3px;top:-7.6px;font-size:11.5px;color:#000020;letter-spacing:-0.15px">API number</span></div>
<div class="a " style="left:724px;top:548px;width:70px;height:25px;background:#e2e2e2;border:1px solid #a2a2a2"></div>
<div class="a " style="left:739px;top:549px;width:40px;height:23px;background:#fff;border-left:1px solid #a2a2a2;border-right:1px solid #a2a2a2"></div>
<span class="t" style="left:755.40px;top:553.44px;font-size:13px;color:#000080;font-weight:bold;">0</span>
<div class="a " style="left:728px;top:559.3px;width:8px;height:1.5px;background:#86a8da"></div>
<div class="a " style="left:781.8px;top:559.3px;width:9px;height:1.5px;background:#86a8da"></div>
<div class="a " style="left:785.2px;top:555.5px;width:1.5px;height:9px;background:#86a8da"></div>
<div class="a " style="left:550px;top:176px;width:175px;height:64px;border-radius:10px;background:#b6b6b6;box-shadow:inset 0 0 0 1px #f6f6f6, inset 0 0 0 4px #ff0a0e, inset 0 0 0 5px #f0f0f0, inset 3px 3px 7px 4px rgba(0,0,0,.5), inset -1px -1px 4px 4px rgba(0,0,0,.12)"></div>
<svg class="a" style="left:555px;top:200px" width="14" height="40" viewBox="555 200 14 40"><path d="M555 207 L568 222 L555 237" fill="none" stroke="#000" stroke-width="1"/></svg>
<div class="a " style="left:558px;top:192px;width:12px;height:12px;background:linear-gradient(135deg,#f6f6f6,#e2e2e2);border:1px solid #d4d4d4"></div>
<span class="t" style="left:582.60px;top:185.80px;font-size:10.5px;color:#000;letter-spacing:-0.137px;">[ block size ]</span>
<span class="t" style="left:646.80px;top:185.80px;font-size:10.5px;color:#000;letter-spacing:-0.155px;">[ timeout,ms ]</span>
<div class="a edit" style="left:581px;top:200px;width:60px;height:22px;"></div>
<span class="t" style="left:584.80px;top:203.80px;font-size:12.6px;color:#000;letter-spacing:0.342px;">256</span>
<div class="a cb" style="left:620px;top:201px;width:19px;height:20px;"></div>
<svg class="a" style="left:625px;top:208.5px" width="9" height="5"><path d="M0 0 L9 0 L4.5 5 Z" fill="#000"/></svg>
<div class="a edit" style="left:645px;top:200px;width:64px;height:22px;"></div>
<span class="t" style="left:648.70px;top:203.80px;font-size:12.6px;color:#000;letter-spacing:-0.333px;">10000</span>
<div class="a cb" style="left:688px;top:201px;width:19px;height:20px;"></div>
<svg class="a" style="left:692.3px;top:208.5px" width="9" height="5"><path d="M0 0 L9 0 L4.5 5 Z" fill="#000"/></svg>
</div></div>
</body></html>
